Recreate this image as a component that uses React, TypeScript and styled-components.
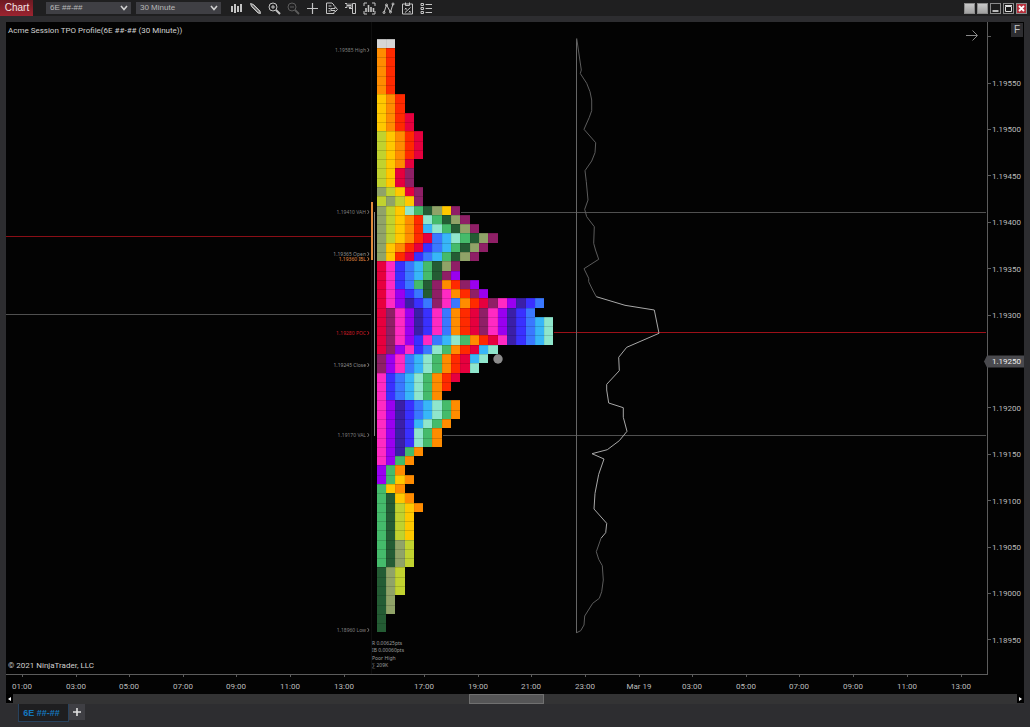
import React from "react";
import styled, { createGlobalStyle } from "styled-components";

const GlobalStyle = createGlobalStyle`
  * { box-sizing: border-box; }
  html, body, #root { margin: 0; min-height: 100vh; }
  body {
    background: #2d2d30;
    color: #c8c8c8;
    font-family: "Liberation Sans", Arial, sans-serif;
    font-size: 8px;
  }
  button, select { font: inherit; color: inherit; border: 0; margin: 0; padding: 0; }
`;

const Window = styled.div`
  display: flex;
  flex-direction: column;
  min-height: 100vh;
`;

const TitleBar = styled.header`
  display: flex;
  align-items: center;
  height: 16px;
  padding-right: 3px;
  background: #1f1f20;
`;

const Brand = styled.h1`
  margin: 0 13px 0 0;
  width: 33px;
  padding-left: 1px;
  font-size: 10px;
  font-weight: 400;
  line-height: 16px;
  text-align: center;
  color: #f2e6e6;
  background: linear-gradient(#6d1a22, #9c2430);
`;

const SelectBox = styled.label`
  position: relative;
  display: flex;
  align-items: center;
  width: 85px;
  height: 12px;
  margin-right: 5px;
  background: #3f3f44;

  svg {
    position: absolute;
    right: 3px;
    pointer-events: none;
  }
`;

const Picker = styled.select`
  appearance: none;
  width: 100%;
  height: 12px;
  padding-left: 4px;
  line-height: 12px;
  color: #b8b8b8;
  background: transparent;
`;

const Tools = styled.nav`
  display: flex;
  margin-left: 1px;
`;

const ToolButton = styled.button<{ $dim?: boolean }>`
  display: flex;
  align-items: center;
  justify-content: center;
  width: 19px;
  height: 16px;
  background: none;
  color: ${(p) => (p.$dim ? "#5c5c5c" : "#c4c4c4")};
`;

const WindowButtons = styled.div`
  display: flex;
  gap: 2px;
  margin-left: auto;
`;

const WindowButton = styled.button<{ $tone: string }>`
  display: flex;
  width: 11px;
  height: 11px;
  background: ${(p) => p.$tone};
  border: 1px solid #8a8a8a;
`;

const Body = styled.main`
  padding: 6px 6px 0;
`;

const ChartPanel = styled.section`
  position: relative;
  background: #030303;
`;

const ChartSvg = styled.svg`
  display: block;
  width: 100%;
  height: auto;
  font-family: "Noto Sans", "Open Sans", sans-serif;
`;

const AxisText = styled.text`
  font-family: Roboto, "Noto Sans", sans-serif;
  font-size: 8px;
`;

const FixedButton = styled.button`
  position: absolute;
  top: 1px;
  right: 1px;
  width: 12px;
  height: 14px;
  font-size: 10px;
  line-height: 14px;
  color: #c4c4c4;
  background: #2d2d30;
`;

const ScrollRow = styled.div`
  display: flex;
  justify-content: space-between;
  height: 10px;
  background: #333334;
`;

const ScrollArrow = styled.button`
  display: flex;
  align-items: center;
  justify-content: center;
  width: 7px;
  height: 9px;
  background: #000;
`;

const ScrollTrack = styled.div`
  flex: 1;
  display: grid;
  grid-template-columns: 456fr 75fr 473fr;
`;

const ScrollThumb = styled.div`
  grid-column: 2;
  height: 10px;
  border: 1px solid #707070;
  background: #555556;
`;

const Tabs = styled.footer`
  display: flex;
  padding-left: 18px;
`;

const Tab = styled.button`
  width: 51px;
  height: 18px;
  padding-right: 4px;
  font-size: 9px;
  font-weight: 700;
  color: #1476bd;
  background: #1e1e20;
  border: 1px solid #27425e;
  border-top: 0;
`;

const AddTab = styled.button`
  display: flex;
  align-items: center;
  justify-content: center;
  width: 16px;
  height: 16px;
  background: #3f3f44;
`;

const palette: Record<string, string> = {
  W: "#d6d6d6", O: "#ff8c00", R: "#ff2a00", Y: "#ffc800", C: "#e6003e",
  L: "#c1d22f", P: "#8f1f66", G: "#90a368", M: "#8fe6cc", E: "#45bb6b",
  D: "#245c34", S: "#38b6f8", B: "#3a78ff", N: "#3a30ff", I: "#3b1fa8",
  V: "#9a00f0", K: "#ff2ac3",
};

/* One string per price row, top to bottom; one letter per half-hour block. */
const profile = [
  "WW", "OR", "OR", "OR", "OR", "OR", "YOR", "YOR",
  "YORC", "YORC", "LYORC", "LYORC", "LYORC", "LYOC", "LYCP", "LYCP",
  "GLYCP", "LGLYP", "GLYMEDGYP", "GLYORMEDGP",
  "GLYORSMEDGP", "GLYORCBSMEDGP", "GYORCNBSEDGP", "GYRCNBSEDGP",
  "CKNBSEDGP", "CKNBSEDPV", "CKNBEDPORPV", "CKVNBDPKORPV",
  "CKVINBPKBORCPKVINB", "CPKVINKBORCPKVINB",
  "CPKVINKBORCPKVINBSM", "CPKVINKBORCPKVINBSM",
  "CPKVNKBSMEORCKINBSM", "CPVKNBMEORCSM",
  "PVKBSMEORCSM", "PVKBSMEORCM", "KNBSMEORC", "KNBSMEOR",
  "KNBSMEO", "KVINBSMEO", "KVINBSMEO", "KVINSMEO",
  "KVINMEO", "KVINMEO", "KVIEO", "KVEO", "VEO", "VEYO",
  "EYO", "EDYO", "EDLYO", "EDLY", "EDLY", "EDLY",
  "EDGL", "EDGL", "EDGL", "DGL", "DGL", "DGL", "DG", "DG", "D", "D",
];

const CELL_W = 9.31;
const CELL_H = 9.28;
const LEFT = 376.6;
const TOP = 38.5;

const levels = [
  { y: 50, text: "1.19585 High", fill: "#808080" },
  { y: 212, text: "1.19410 VAH", fill: "#808080" },
  { y: 254, text: "1.19365 Open", fill: "#909090" },
  { y: 259, text: "1.19360 IBL", fill: "#e58c42" },
  { y: 333, text: "1.19280 POC", fill: "#d01c28" },
  { y: 365, text: "1.19245 Close", fill: "#909090" },
  { y: 435, text: "1.19170 VAL", fill: "#808080" },
  { y: 630, text: "1.18960 Low", fill: "#808080" },
];

const stats = ["R 0.00625pts", "IB 0.00060pts", "Poor High", "∑ 209K"];

const prices = Array.from({ length: 13 }, (_, i) => ({
  y: 83 + i * 46.4,
  text: (1.1955 - i * 0.0005).toFixed(5),
}));

const times: [number, string][] = [
  [22, "01:00"], [76, "03:00"], [129, "05:00"], [183, "07:00"], [236, "09:00"],
  [290, "11:00"], [344, "13:00"], [424, "17:00"], [478, "19:00"], [531, "21:00"],
  [585, "23:00"], [639, "Mar 19"], [692, "03:00"], [746, "05:00"], [799, "07:00"],
  [853, "09:00"], [907, "11:00"], [961, "13:00"],
];

const upperCurve =
  "576.7,38.3 581.3,70 580.3,73.5 586.7,83.3 590,91.7 591.7,100 591.7,110.7 589.3,117.3 584,129.3 595.7,142.7 595,152.7 591.7,161 585,170.7 586.3,181.7 588,200 584.7,209.3 586.7,216.7 594.3,226.7 593.7,243.3 595.5,250 598.7,259.3 584,268.7 588.7,278.3 588.7,281.7 592.7,290 596.3,296.7";
const valueCurve =
  "596.3,296.7 625,305.3 654.3,310 659,333.3 626.7,347.3 618.7,357.3 619.3,370.7 606.7,384.3 606.7,390 608.7,403 623.3,407.7 623.3,417.3 627,431.3 619.3,440.7 607.3,449.7 592,453.7 604,459 598.7,474.3 595,493.3 594,509 606.7,523.3 605.7,532.7 601,538.3";
const lowerCurve =
  "601,538.3 596.3,551.7 598.7,559.3 602.3,565.7 603.3,580 601.7,591.7 599.3,598.3 592.7,603.3 584.7,616 584,625 580.7,630.7 576.7,632.7";

function Profile() {
  return (
    <g shapeRendering="crispEdges">
      {profile.map((row, r) =>
        row.split("").map((c, i) => (
          <rect
            key={`${r}-${i}`}
            x={LEFT + i * CELL_W}
            y={TOP + r * CELL_H}
            width={CELL_W}
            height={CELL_H}
            fill={palette[c]}
          />
        ))
      )}
      {profile.map((row, r) => (
        <path
          key={r}
          d={`M${LEFT} ${TOP + r * CELL_H + 0.5}h${row.length * CELL_W}`}
          stroke="#000"
          strokeOpacity="0.14"
        />
      ))}
      {profile.map((row, r) => (
        <path
          key={r}
          d={row.split("").map((_, i) => `M${LEFT + i * CELL_W + 0.3} ${TOP + r * CELL_H}v${CELL_H}`).join("")}
          stroke="#000"
          strokeOpacity="0.06"
          fill="none"
        />
      ))}
    </g>
  );
}

function Chart() {
  return (
    <ChartSvg viewBox="6 22 1018 672" role="img" aria-label="Session TPO profile">
      <AxisText x="8" y="33" fill="#d0d0d0">Acme Session TPO Profile(6E ##-## (30 Minute))</AxisText>
      <path d="M966 35.500h11M972.500 30.500l5 5-5 5" stroke="#8a8a8a" fill="none" />

      <g shapeRendering="crispEdges">
        <path d="M371.500 22V674" stroke="#0e0e0e" />
        <path d="M6 236.500H371" stroke="#8a0e16" />
        <path d="M6 314.500H371M461 212.500H986M443 435.500H986" stroke="#505050" />
        <rect x="554" y="332" width="432" height="1" fill="#9c1018" />
        <path d="M576.500 39V633" stroke="#666" />
        <rect x="371" y="202" width="2" height="58" fill="#e08a3c" />
        <rect x="374" y="212" width="1" height="224" fill="#858585" />
      </g>

      <Profile />
      <circle cx="498" cy="359" r="4.700" fill="#8c8c8c" />

      <g fill="none" strokeWidth="1">
        <polyline points={upperCurve} stroke="#5c5c5c" />
        <polyline points={valueCurve} stroke="#a8a8a8" />
        <polyline points={lowerCurve} stroke="#5c5c5c" />
      </g>

      {levels.map((l) => (
        <g key={l.text}>
          <text x="366" y={l.y + 2} fontSize="5" textAnchor="end" fill={l.fill}>{l.text}</text>
          <path d={`M367.500 ${l.y - 2}l1.500 2-1.500 2`} stroke={l.fill} fill="none" strokeWidth="0.800" />
        </g>
      ))}

      {stats.map((s, i) => (
        <text key={s} x="372" y={645 + i * 7.4} fontSize="5" fill="#9c9c9c">{s}</text>
      ))}

      <AxisText x="8" y="668" fill="#d0d0d0">© 2021 NinjaTrader, LLC</AxisText>

      <g shapeRendering="crispEdges" stroke="#5c5c5c">
        <path d="M6 674.500H987.500V22" fill="none" />
        <path d="M988 36.500h3" />
        {prices.map((p) => <path key={p.text} d={`M988 ${p.y}h3`} />)}
        {times.map(([x]) => <path key={x} d={`M${x + 0.5} 675v2`} />)}
      </g>

      <path d="M984 361.500l3-6h37v12h-37z" fill="#4a4a4e" />
      {prices.map((p) => (
        <AxisText key={p.text} x="992" y={p.y + 3} fill={p.text === "1.19250" ? "#f0f0f0" : "#bcbcbc"}>{p.text}</AxisText>
      ))}
      {times.map(([x, t]) => (
        <AxisText key={x} x={x} y="689" textAnchor="middle" fill="#bcbcbc">{t}</AxisText>
      ))}
    </ChartSvg>
  );
}

const icons: { name: string; dim?: boolean; art: React.ReactNode }[] = [
  { name: "Chart style", art: <path d="M2 4v6M5 2v9M8 4v6M11 2v8" strokeWidth="2" /> },
  { name: "Drawing tools", art: <><path d="M1.500 1.500l1 3 6.500 6.500 2.500.500-.500-2.500L4.500 2.500z" fill="currentColor" fillOpacity=".7" /><path d="M3.500 3.500l6 6" stroke="#444" strokeWidth=".8" /></> },
  { name: "Zoom in", art: <><circle cx="5" cy="5" r="4" /><path d="M3 5h4M5 3v4" /><path d="M8 8l4 4" strokeWidth="2" /></> },
  { name: "Zoom out", dim: true, art: <><circle cx="5" cy="5" r="4" /><path d="M3 5h4" /><path d="M8 8l4 4" strokeWidth="1.800" /></> },
  { name: "Cursor", art: <path d="M6.500 1v11M1 6.500h11" strokeWidth="1.200" /> },
  { name: "Data box", art: <><path d="M9 4V3L7 1H1.500v10.500H9V10M3.500 4h3M3.500 6.500h2M3.500 9h2" /><path d="M6 6.500h4V4.500L12.500 7.500 10 10V8.500H6z" /></> },
  { name: "Chart trader", art: <path d="M8.500 1.500h3v10h-3zM8 6.500H5M1 1.500h2v4H1M5 1.500v4h2v-4M3 3.500h4" /> },
  { name: "Data series", art: <><path d="M1 4V1h3M9 1h3v3M1 9v3h3M9 12h3V9" /><path d="M3 10V6M5.500 10V3M8 10V5M10.500 10V6" strokeWidth="1.600" /></> },
  { name: "Indicators", art: <><path d="M2 10.500L4.500 3l4 7L11 2" /><circle cx="2" cy="10.500" r="1" /><circle cx="4.500" cy="3" r="1" /><circle cx="8.500" cy="10" r="1" /><circle cx="11" cy="2" r="1" /></> },
  { name: "Strategies", art: <path d="M1.500 2h10v10h-10zM4.500 .500v3h4v-3M4 6l1.500 1.500M5.500 6L4 7.500M9.500 5.500L4 10.500M8 9l1.500 1.500M9.500 9L8 10.500" /> },
  { name: "Properties", art: <path d="M1 1.500h2.500v2H1zM1 5.500h2.500v2H1zM1 9.500h2.500v2H1zM5.500 2.500H12M5.500 6.500H12M5.500 10.500H12" /> },
];

function Dropdown({ label, value }: { label: string; value: string }) {
  return (
    <SelectBox>
      <Picker aria-label={label} defaultValue={value}>
        <option>{value}</option>
      </Picker>
      <svg width="8" height="6" viewBox="0 0 8 6" fill="none" stroke="#d0d0d0" strokeWidth="1.600">
        <path d="M1 1l3 3.500L7 1" />
      </svg>
    </SelectBox>
  );
}

export default function App() {
  return (
    <Window>
      <GlobalStyle />
      <TitleBar>
        <Brand>Chart</Brand>
        <Dropdown label="Instrument" value="6E ##-##" />
        <Dropdown label="Interval" value="30 Minute" />
        <Tools aria-label="Chart tools">
          {icons.map((i) => (
            <ToolButton key={i.name} aria-label={i.name} $dim={i.dim}>
              <svg width="13" height="13" viewBox="0 0 13 13" fill="none" stroke="currentColor" strokeWidth="1">
                {i.art}
              </svg>
            </ToolButton>
          ))}
        </Tools>
        <WindowButtons>
          <WindowButton aria-label="Link instrument" $tone="linear-gradient(#c8c8c8, #a0a0a0)" />
          <WindowButton aria-label="Link interval" $tone="linear-gradient(#c8c8c8, #a0a0a0)" />
          <WindowButton aria-label="Minimize" $tone="#1c1c1c">
            <svg width="9" height="9" viewBox="0 0 9 9"><path d="M1.500 7h6" stroke="#fff" strokeWidth="1.400" /></svg>
          </WindowButton>
          <WindowButton aria-label="Maximize" $tone="#1c1c1c">
            <svg width="9" height="9" viewBox="0 0 9 9" fill="none" stroke="#ddd"><path d="M1.500 2.500h6v5h-6zM1 1.500h7" /></svg>
          </WindowButton>
          <WindowButton aria-label="Close" $tone="#b5303c">
            <svg width="9" height="9" viewBox="0 0 9 9"><path d="M2 2l5 5M7 2L2 7" stroke="#fff" strokeWidth="1.800" /></svg>
          </WindowButton>
        </WindowButtons>
      </TitleBar>
      <Body>
        <ChartPanel>
          <Chart />
          <FixedButton aria-label="Fixed scale">F</FixedButton>
        </ChartPanel>
        <ScrollRow>
          <ScrollArrow aria-label="Scroll left">
            <svg width="3" height="4" viewBox="0 0 3 4"><path d="M3 0v4L0 2z" fill="#fff" /></svg>
          </ScrollArrow>
          <ScrollTrack><ScrollThumb /></ScrollTrack>
          <ScrollArrow aria-label="Scroll right">
            <svg width="3" height="4" viewBox="0 0 3 4"><path d="M0 0v4l3-2z" fill="#fff" /></svg>
          </ScrollArrow>
        </ScrollRow>
      </Body>
      <Tabs>
        <Tab>6E ##-##</Tab>
        <AddTab aria-label="Add tab">
          <svg width="8" height="8" viewBox="0 0 8 8"><path d="M4 0v8M0 4h8" stroke="#e0e0e0" strokeWidth="1.600" /></svg>
        </AddTab>
      </Tabs>
    </Window>
  );
}
